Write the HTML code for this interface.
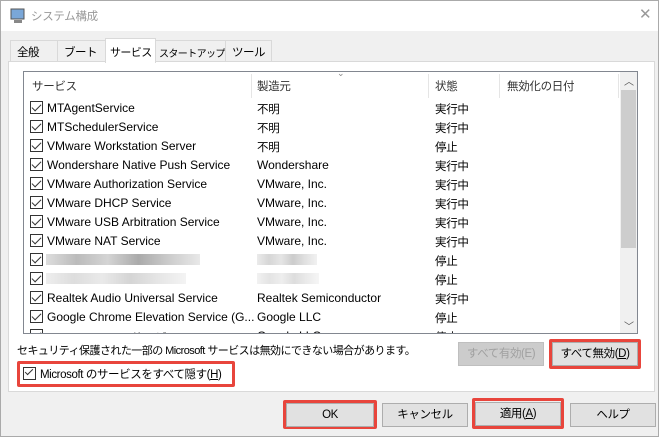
<!DOCTYPE html>
<html><head><meta charset="utf-8"><style>
*{box-sizing:border-box;margin:0;padding:0}
body{width:665px;height:437px;background:#fff;font-family:"Liberation Sans","Noto Sans CJK JP",sans-serif;font-size:12px;color:#000;position:relative;overflow:hidden}
.a{position:absolute;white-space:nowrap}
.win{left:0;top:0;width:659px;height:437px;border:1px solid #aaa;background:#f0f0f0}
.title{left:1px;top:1px;width:657px;height:30px;background:#fff}
.tab{top:40px;height:22px;border:1px solid #d9d9d9;border-bottom:none;background:#f0f0f0;font-size:11.5px;padding:3px 0 0 6px;letter-spacing:-0.5px;overflow:hidden}
.panel{left:8px;top:61px;width:647px;height:331px;background:#fff;border:1px solid #d9d9d9}
.list{left:23px;top:71px;width:615px;height:263px;border:1px solid #828790;background:#fff;overflow:hidden}
.row{position:absolute;left:0;height:19px;width:596px}
.cb{position:absolute;left:6px;top:3px;width:13px;height:13px;border:1px solid #333;background:#fff}
.cb:after{content:"";position:absolute;left:3px;top:0px;width:4px;height:8px;border:solid #333;border-width:0 1.3px 1.3px 0;transform:rotate(45deg)}
.t{position:absolute;top:3px;white-space:nowrap}
.j{font-size:11.5px;letter-spacing:-0.3px}
.btn{height:24px;border:1px solid #adadad;background:#e1e1e1;text-align:center;line-height:22px;font-size:11.5px;letter-spacing:-0.4px}
.red{border:3px solid #e8453c;border-radius:2px}
.blur{position:absolute;height:11px;background:linear-gradient(90deg,#ddd,#bbb,#d4d4d4,#aaa,#ccc,#e8e8e8)}
</style></head><body>
<div class="a win"></div>
<div class="a title"></div>
<svg class="a" style="left:10px;top:8px" width="16" height="16"><rect x="1" y="1" width="13" height="10" fill="#7aa7d8" stroke="#555"/><rect x="4" y="12" width="8" height="3" fill="#888"/></svg>
<div class="a j" style="left:31px;top:8px;color:#999">システム構成</div>
<div class="a" style="left:639px;top:5px;color:#999;font-size:15px">✕</div>
<div class="a tab" style="left:10px;width:48px">全般</div>
<div class="a tab" style="left:57px;width:49px">ブート</div>
<div class="a tab" style="left:155px;width:71px;padding:4px 0 0 3px;font-size:10px;letter-spacing:-0.6px">スタートアップ</div>
<div class="a tab" style="left:225px;width:47px">ツール</div>
<div class="a panel"></div>
<div class="a tab" style="left:105px;top:38px;width:51px;height:25px;background:#fff;padding:5px 0 0 4px;font-size:11px;letter-spacing:-0.6px">サービス</div>
<div class="a list">
 <div class="a j" style="left:8px;top:6px;color:#333">サービス</div>
 <div class="a j" style="left:233px;top:6px;color:#333">製造元</div>
 <div class="a j" style="left:411px;top:6px;color:#333">状態</div>
 <div class="a j" style="left:483px;top:6px;color:#333">無効化の日付</div>
 <div class="a" style="left:313px;top:-4px;color:#888;font-size:9px">⌄</div>
 <div class="a" style="left:227px;top:2px;width:1px;height:24px;background:#e5e5e5"></div>
 <div class="a" style="left:404px;top:2px;width:1px;height:24px;background:#e5e5e5"></div>
 <div class="a" style="left:475px;top:2px;width:1px;height:24px;background:#e5e5e5"></div>
 <div class="a" style="left:594px;top:2px;width:1px;height:24px;background:#e5e5e5"></div>
 <div class="a" style="left:596px;top:0;width:17px;height:261px;background:#f0f0f0"></div>
 <div class="a" style="left:597px;top:18px;width:15px;height:158px;background:#cdcdcd"></div>
 <div class="a" style="left:600px;top:1px;color:#555;font-size:10px">︿</div>
 <div class="a" style="left:600px;top:246px;color:#555;font-size:10px">﹀</div>
 <div class="row" style="top:26px"><div class="cb"></div><div class="t" style="left:23px">MTAgentService</div><div class="t j" style="left:233px">不明</div><div class="t j" style="left:411px">実行中</div></div>
 <div class="row" style="top:45px"><div class="cb"></div><div class="t" style="left:23px">MTSchedulerService</div><div class="t j" style="left:233px">不明</div><div class="t j" style="left:411px">実行中</div></div>
 <div class="row" style="top:64px"><div class="cb"></div><div class="t" style="left:23px">VMware Workstation Server</div><div class="t j" style="left:233px">不明</div><div class="t j" style="left:411px">停止</div></div>
 <div class="row" style="top:83px"><div class="cb"></div><div class="t" style="left:23px">Wondershare Native Push Service</div><div class="t" style="left:233px">Wondershare</div><div class="t j" style="left:411px">実行中</div></div>
 <div class="row" style="top:102px"><div class="cb"></div><div class="t" style="left:23px">VMware Authorization Service</div><div class="t" style="left:233px">VMware, Inc.</div><div class="t j" style="left:411px">実行中</div></div>
 <div class="row" style="top:121px"><div class="cb"></div><div class="t" style="left:23px">VMware DHCP Service</div><div class="t" style="left:233px">VMware, Inc.</div><div class="t j" style="left:411px">実行中</div></div>
 <div class="row" style="top:140px"><div class="cb"></div><div class="t" style="left:23px">VMware USB Arbitration Service</div><div class="t" style="left:233px">VMware, Inc.</div><div class="t j" style="left:411px">実行中</div></div>
 <div class="row" style="top:159px"><div class="cb"></div><div class="t" style="left:23px">VMware NAT Service</div><div class="t" style="left:233px">VMware, Inc.</div><div class="t j" style="left:411px">実行中</div></div>
 <div class="row" style="top:178px"><div class="cb"></div><div class="blur" style="left:22px;top:4px;width:154px"></div><div class="blur" style="left:233px;top:4px;width:60px;opacity:.6"></div><div class="t j" style="left:411px">停止</div></div>
 <div class="row" style="top:197px"><div class="cb"></div><div class="blur" style="left:22px;top:4px;width:140px;opacity:.5"></div><div class="blur" style="left:233px;top:4px;width:62px;opacity:.4"></div><div class="t j" style="left:411px">停止</div></div>
 <div class="row" style="top:216px"><div class="cb"></div><div class="t" style="left:23px">Realtek Audio Universal Service</div><div class="t" style="left:233px">Realtek Semiconductor</div><div class="t j" style="left:411px">実行中</div></div>
 <div class="row" style="top:235px"><div class="cb"></div><div class="t" style="left:23px">Google Chrome Elevation Service (G...</div><div class="t" style="left:233px">Google LLC</div><div class="t j" style="left:411px">停止</div></div>
 <div class="row" style="top:254px"><div class="cb"></div><div class="t" style="left:23px">Google Update サービス (Google...</div><div class="t" style="left:233px">Google LLC</div><div class="t j" style="left:411px">停止</div></div>
</div>
<div class="a" style="left:17px;top:342px;font-size:11px;letter-spacing:-0.55px">セキュリティ保護された一部の Microsoft サービスは無効にできない場合があります。</div>
<div class="a btn" style="left:458px;top:342px;width:86px;color:#a0a0a0;background:#ccc;border-color:#bfbfbf">すべて有効(E)</div>
<div class="a red" style="left:549px;top:339px;width:92px;height:30px"></div>
<div class="a btn" style="left:552px;top:342px;width:86px">すべて無効(<u>D</u>)</div>
<div class="a red" style="left:17px;top:361px;width:218px;height:26px"></div>
<div class="a" style="left:23px;top:367px;width:13px;height:13px;border:1px solid #333"></div>
<div class="a" style="left:27px;top:367px;width:4px;height:8px;border:solid #333;border-width:0 1.3px 1.3px 0;transform:rotate(45deg)"></div>
<div class="a" style="left:40px;top:366px;font-size:11.5px;letter-spacing:-0.4px">Microsoft のサービスをすべて隠す(<u>H</u>)</div>
<div class="a red" style="left:283px;top:400px;width:94px;height:29px"></div>
<div class="a btn" style="left:286px;top:403px;width:88px">OK</div>
<div class="a btn" style="left:382px;top:403px;width:86px">キャンセル</div>
<div class="a red" style="left:472px;top:398px;width:92px;height:31px"></div>
<div class="a btn" style="left:475px;top:402px;width:86px">適用(<u>A</u>)</div>
<div class="a btn" style="left:570px;top:403px;width:86px">ヘルプ</div>
</body></html>
